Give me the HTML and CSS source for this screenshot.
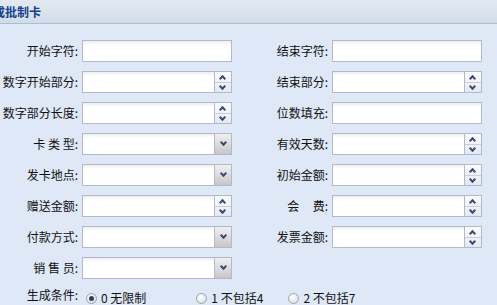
FILE: index.html
```html
<!DOCTYPE html>
<html>
<head>
<meta charset="utf-8">
<link rel="stylesheet" href="styles.css">
</head>
<body>
<div class="panel">
  <div class="header"><span class="title">成批制卡</span></div>
  <div class="body">
    <div class="grid">
      <div class="field"><label>开始字符:</label><div class="input"></div></div>
      <div class="field"><label>结束字符:</label><div class="input"></div></div>

      <div class="field"><label>数字开始部分:</label><div class="input"><span class="spin"><i class="up"></i><i class="down"></i></span></div></div>
      <div class="field"><label>结束部分:</label><div class="input"><span class="spin"><i class="up"></i><i class="down"></i></span></div></div>

      <div class="field"><label>数字部分长度:</label><div class="input"><span class="spin"><i class="up"></i><i class="down"></i></span></div></div>
      <div class="field"><label>位数填充:</label><div class="input"></div></div>

      <div class="field"><label>卡 类 型:</label><div class="input"><span class="combo"><i class="down"></i></span></div></div>
      <div class="field"><label>有效天数:</label><div class="input"><span class="spin"><i class="up"></i><i class="down"></i></span></div></div>

      <div class="field"><label>发卡地点:</label><div class="input"><span class="combo"><i class="down"></i></span></div></div>
      <div class="field"><label>初始金额:</label><div class="input"><span class="spin"><i class="up"></i><i class="down"></i></span></div></div>

      <div class="field"><label>赠送金额:</label><div class="input"><span class="spin"><i class="up"></i><i class="down"></i></span></div></div>
      <div class="field"><label>会&nbsp;&nbsp;&nbsp;&nbsp;&nbsp;费:</label><div class="input"><span class="spin"><i class="up"></i><i class="down"></i></span></div></div>

      <div class="field"><label>付款方式:</label><div class="input"><span class="combo"><i class="down"></i></span></div></div>
      <div class="field"><label>发票金额:</label><div class="input"><span class="spin"><i class="up"></i><i class="down"></i></span></div></div>

      <div class="field"><label>销 售 员:</label><div class="input"><span class="combo"><i class="down"></i></span></div></div>
    </div>
    <div class="radio-row">
      <label class="rlabel">生成条件:</label>
      <span class="opt opt0"><span class="radio checked"></span>0 无限制</span>
      <span class="opt opt1"><span class="radio"></span>1 不包括4</span>
      <span class="opt opt2"><span class="radio"></span>2 不包括7</span>
    </div>
  </div>
</div>
</body>
</html>
```
FILE: styles.css
```css
html, body {
  margin: 0;
  padding: 0;
  background: #dfe8f6;
  font-family: "Noto Sans CJK SC", "Noto Sans", sans-serif;
  font-size: 12px;
  color: #111;
  overflow: hidden;
}
.panel {
  width: 497px;
  height: 305px;
}
.header {
  height: 24px;
  box-sizing: border-box;
  border-bottom: 1px solid #a9bdd6;
  background: linear-gradient(#e3e9f1, #d2dce8);
  display: flex;
  align-items: center;
  overflow: hidden;
}
.title {
  margin-left: -7px;
  font-weight: bold;
  color: #15428b;
  font-size: 12px;
  line-height: 14px;
}
.body {
  padding-top: 16px;
}
.grid {
  display: grid;
  grid-template-columns: 250px 250px;
  row-gap: 9px;
}
.field {
  display: flex;
  align-items: center;
  height: 22px;
}
.field label {
  width: 78px;
  text-align: right;
  margin-right: 4px;
  white-space: pre;
  line-height: 14px;
}
.input {
  position: relative;
  width: 150px;
  height: 22px;
  box-sizing: border-box;
  border: 1px solid #b5b8c8;
  background: linear-gradient(#eeeeee, #ffffff 4px);
}
.spin, .combo {
  position: absolute;
  right: -1px;
  top: -1px;
  width: 18px;
  height: 22px;
  box-sizing: border-box;
  border: 1px solid #b5b8c8;
  display: flex;
  flex-direction: column;
}
.spin {
  background: linear-gradient(#fbfcfe, #e4e9f1);
}
.spin .up, .spin .down {
  flex: 1;
  position: relative;
}
.spin .up {
  border-bottom: 1px solid #c9d0dc;
}
.up::before, .down::before {
  content: "";
  position: absolute;
  left: 5px;
  width: 5px;
  height: 5px;
  border-left: 2px solid #3c4a73;
  border-top: 2px solid #3c4a73;
  box-sizing: border-box;
}
.spin .up::before {
  top: 4px;
  transform: rotate(45deg);
}
.spin .down::before {
  top: 1px;
  transform: rotate(225deg);
}
.combo {
  background: linear-gradient(#f0f0f0, #d8d8d8 60%, #c6c6c6);
  border-color: #b5b8c8;
}
.combo .down {
  flex: 1;
  position: relative;
}
.combo .down::before {
  top: 6px;
  left: 6px;
  transform: rotate(225deg);
}
.radio-row {
  display: flex;
  align-items: flex-start;
  margin-top: 9px;
  line-height: 14px;
}
.rlabel {
  width: 78px;
  text-align: right;
  margin-right: 8px;
}
.opt {
  display: flex;
  align-items: center;
  margin-top: 3px;
  white-space: pre;
}
.opt1 { margin-left: 50px; }
.opt2 { margin-left: 25px; }
.radio {
  width: 11px;
  height: 11px;
  box-sizing: border-box;
  border-radius: 50%;
  border: 1px solid #9aa4b4;
  background: radial-gradient(circle at 40% 35%, #ffffff, #d4d8de);
  margin-right: 4px;
  position: relative;
}
.radio.checked::after {
  content: "";
  position: absolute;
  left: 2px;
  top: 2px;
  width: 5px;
  height: 5px;
  border-radius: 50%;
  background: #2d3f63;
}
```
